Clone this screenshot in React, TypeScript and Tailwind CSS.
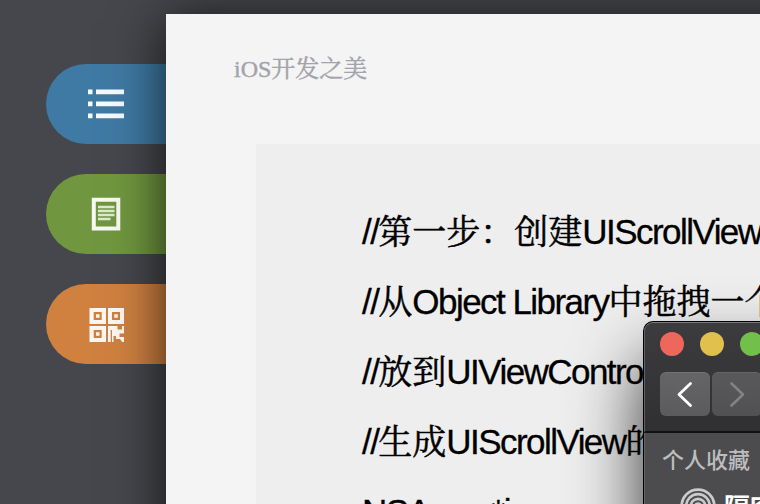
const codeLines = [
  '//第一步：创建UIScrollView',
  '//从Object Library中拖拽一个',
  '//放到UIViewController',
  '//生成UIScrollView的',
  'NSArray *imgs',
];

function CodeLine({ text }: { text: string }) {
  const runs = text.match(/[\x20-\x7e]+|[^\x20-\x7e]+/g) ?? [];
  return (
    <div className="h-[70px] whitespace-nowrap">
      {runs.map((run, i) => (
        <span
          key={i}
          className={/[\x20-\x7e]/.test(run) ? 'text-[35px] tracking-[-1.55px] [-webkit-text-stroke:0.3px_black]' : ''}
        >
          {run}
        </span>
      ))}
    </div>
  );
}

function ListIcon() {
  return (
    <svg width="40" height="40" viewBox="0 0 40 40" fill="#f6fafc">
      <path d="M2 5.5h4.5v4.8H2zM10 5.5h28v4.8H10zM2 17.5h4.5v4.8H2zM10 17.5h28v4.8H10zM2 29.5h4.5v4.8H2zM10 29.5h28v4.8H10z" />
    </svg>
  );
}

function PageIcon() {
  return (
    <svg width="40" height="40" viewBox="0 0 40 40" fill="none" stroke="#f7f9f2">
      <path d="M7.8 5.8h24.5v28.6H7.8z" strokeWidth="4" />
      <path d="M12 13h16.5M12 17h16.5M12 21h16.5M12 25h12.5" strokeWidth="2.4" stroke="#dfe9cf" />
    </svg>
  );
}

function QrIcon() {
  return (
    <svg width="40" height="40" viewBox="0 0 40 40" fill="#fdf7f1">
      <path
        fillRule="evenodd"
        d="M3.5 4H20v16H3.5zM7.7 8v8h8V8zM22 4h16v16H22zM26 8v8h8V8zM3.5 22H20v16H3.5zM7.7 26v8h8v-8z"
      />
      <path d="M10 10.3h3.5v3.5H10zM28.3 10.3h3.5v3.5h-3.5zM10 28.3h3.5v3.5H10z" />
      <path d="M22 22h9.5v3.5H36V22h2v7.5h-4.5V33H38v5h-1.8l-2.2-3h-4v-3h-2.5v6H26V26h-1.3v12H22z" />
    </svg>
  );
}

function AirDropIcon() {
  return (
    <svg width="36" height="36" viewBox="0 0 36 36" fill="none" stroke="#cbcbcd" strokeWidth="2.7">
      <circle cx="18" cy="18" r="16.4" />
      <circle cx="18" cy="18" r="11.8" />
      <circle cx="18" cy="18" r="7.2" />
      <circle cx="18" cy="18" r="2.5" fill="#cbcbcd" />
    </svg>
  );
}

function FinderWindow() {
  return (
    <div className="absolute left-[643px] top-[321px] h-[240px] w-[300px] overflow-hidden rounded-tl-[10px] border-l border-t border-black bg-[#4c4c4e] font-['Noto_Sans_CJK_SC',sans-serif]">
      <div className="h-[111px] rounded-tl-[9px] border-b-2 border-l border-t border-b-[#111112] border-l-[#626264] border-t-[#7b7b7d] bg-linear-to-b from-[#3c3c3e] to-[#303032] pl-[15px] pt-[9px]">
        <div className="flex gap-4">
          <i className="size-6 shrink-0 rounded-full bg-[#ee675c]" />
          <i className="size-6 shrink-0 rounded-full bg-[#e1c04d]" />
          <i className="size-6 shrink-0 rounded-full bg-[#72c04a]" />
        </div>
        <div className="mt-4 flex gap-0.5">
          <button className="flex h-11 w-[50px] shrink-0 items-center justify-center rounded-md border-t border-[#737375] bg-linear-to-b from-[#656567] to-[#5b5b5d]">
            <svg width="50" height="44" fill="none" stroke="#fff" strokeWidth="2.8" strokeLinecap="round" strokeLinejoin="round">
              <path d="M30.5 10.5 19 21.5l11.5 11" />
            </svg>
          </button>
          <button className="flex h-11 w-[50px] shrink-0 items-center justify-center rounded-md border-t border-[#656567] bg-linear-to-b from-[#59595b] to-[#515153]">
            <svg width="50" height="44" fill="none" stroke="#828284" strokeWidth="2.6" strokeLinecap="round" strokeLinejoin="round">
              <path d="M19.5 10.5 31 21.5 19.5 32.5" />
            </svg>
          </button>
        </div>
      </div>
      <div className="h-[140px] border-l border-[#626264] pl-[17px] pt-[9px]">
        <div className="text-[22px] font-medium leading-8 text-[#bdbdbf]">个人收藏</div>
        <div className="mt-[14px] flex items-center gap-2 pl-[18px]">
          <AirDropIcon />
          <span className="whitespace-nowrap text-[26px] font-bold leading-9 text-white">隔空投送</span>
        </div>
      </div>
    </div>
  );
}

export default function App() {
  return (
    <div className="relative flex h-[504px] w-[760px] overflow-hidden bg-[#46474c]">
      <nav className="flex w-[166px] shrink-0 flex-col gap-[30px] pl-[46px] pt-16">
        <a className="flex h-20 items-center rounded-l-full bg-[#3f7aa4] pl-10">
          <ListIcon />
        </a>
        <a className="flex h-20 items-center rounded-l-full bg-[#70973f] pl-10">
          <PageIcon />
        </a>
        <a className="flex h-20 items-center rounded-l-full bg-[#d08140] pl-10">
          <QrIcon />
        </a>
      </nav>
      <main className="mt-3.5 h-[600px] w-[800px] shrink-0 bg-[#f4f4f4] shadow-[0_6px_50px_rgba(0,0,0,0.75)]">
        <h1 className="h-[130px] pl-[68px] pt-[37px] font-['Liberation_Serif','Noto_Serif_CJK_SC','Noto_Sans_CJK_SC',serif] text-2xl leading-9 text-[#a2a3aa] [-webkit-text-stroke:0.4px_#a2a3aa]">
          iOS开发之美
        </h1>
        <section className="ml-[90px] h-[500px] bg-[#eee] pl-[106px] pt-[53px] font-['Liberation_Sans','Noto_Serif_CJK_SC','Noto_Sans_CJK_SC',sans-serif] text-[34px] leading-[70px] text-black [-webkit-text-stroke:0.5px_black]">
          {codeLines.map((line) => (
            <CodeLine key={line} text={line} />
          ))}
        </section>
      </main>
      <div className="absolute left-[643px] top-[321px] h-[240px] w-[300px] rounded-tl-[10px] shadow-[0_40px_70px_rgba(0,0,0,0.8)]" />
      <FinderWindow />
    </div>
  );
}
